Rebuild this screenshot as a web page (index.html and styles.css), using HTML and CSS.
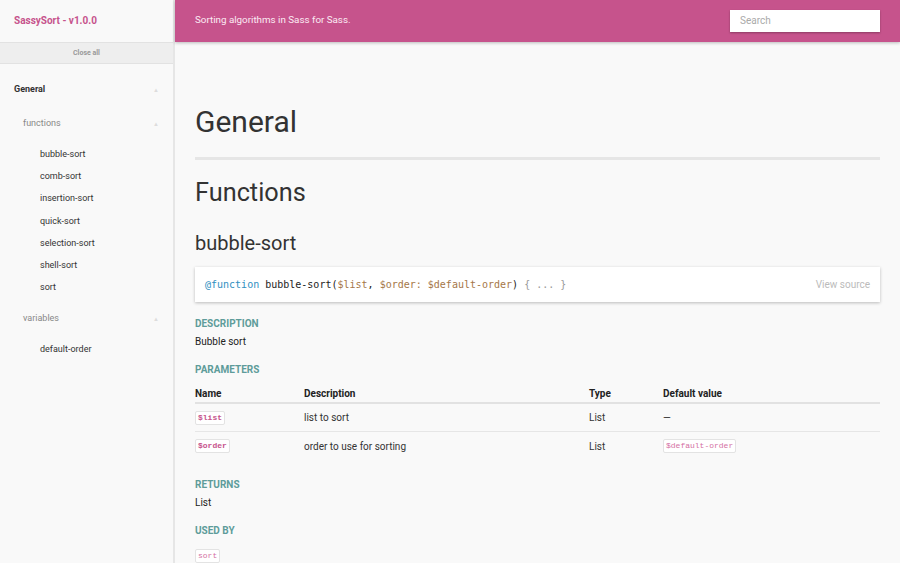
FILE: index.html
```html
<!DOCTYPE html>
<html>
<head>
<meta charset="utf-8">
<link rel="stylesheet" href="styles.css">
</head>
<body>
<div class="page">
  <aside class="sidebar">
    <div class="side-head"><a class="brand">SassySort - v1.0.0</a></div>
    <div class="close-all">Close all</div>
    <nav class="nav">
      <div class="group">
        <div class="group-title"><span>General</span><span class="caret">▲</span></div>
        <div class="sub">
          <div class="sub-title"><span>functions</span><span class="caret">▲</span></div>
          <ul class="items">
            <li>bubble-sort</li>
            <li>comb-sort</li>
            <li>insertion-sort</li>
            <li>quick-sort</li>
            <li>selection-sort</li>
            <li>shell-sort</li>
            <li>sort</li>
          </ul>
        </div>
        <div class="sub">
          <div class="sub-title"><span>variables</span><span class="caret">▲</span></div>
          <ul class="items">
            <li>default-order</li>
          </ul>
        </div>
      </div>
    </nav>
  </aside>
  <div class="main">
    <header class="topbar">
      <p class="tagline">Sorting algorithms in Sass for Sass.</p>
      <div class="search">Search</div>
    </header>
    <section class="content">
      <h1 class="h-group">General</h1>
      <h2 class="h-type">Functions</h2>
      <h3 class="h-item">bubble-sort</h3>
      <div class="code">
        <code><span class="kw">@function</span> bubble-sort(<span class="var">$list</span>, <span class="var">$order</span><span class="var">:</span> <span class="var">$default-order</span>) <span class="dim">{ ... }</span></code>
        <span class="view">View source</span>
      </div>
      <h4 class="label">Description</h4>
      <p class="text">Bubble sort</p>
      <h4 class="label">Parameters</h4>
      <table class="params">
        <thead>
          <tr><th class="c-name">Name</th><th class="c-desc">Description</th><th class="c-type">Type</th><th>Default value</th></tr>
        </thead>
        <tbody>
          <tr><td><span class="tag strong">$list</span></td><td>list to sort</td><td>List</td><td>—</td></tr>
          <tr><td><span class="tag strong">$order</span></td><td>order to use for sorting</td><td>List</td><td><span class="tag">$default-order</span></td></tr>
        </tbody>
      </table>
      <h4 class="label label-gap">Returns</h4>
      <p class="text">List</p>
      <h4 class="label">Used by</h4>
      <p class="tags"><span class="tag">sort</span></p>
    </section>
  </div>
</div>
</body>
</html>
```

FILE: styles.css
```css
* { box-sizing: border-box; }
html, body { margin: 0; padding: 0; }
body {
  font-family: Roboto, "Liberation Sans", sans-serif;
  background: #f9f9f9;
  color: #333;
  width: 900px;
  height: 563px;
  overflow: hidden;
}
.page { display: flex; height: 563px; }

.sidebar {
  width: 175px;
  flex: none;
  background: #f9f9f9;
  border-right: 2px solid #e6e6e6;
}
.side-head {
  height: 42px;
  display: flex;
  align-items: center;
  padding-left: 14px;
  padding-bottom: 1px;
}
.brand { color: #c6538c; font-weight: 700; font-size: 10px; }
.close-all {
  height: 22px;
  background: #eeeeee;
  border-top: 1px solid #e2e2e2;
  border-bottom: 1px solid #e2e2e2;
  color: #999;
  font-size: 7px;
  font-weight: 700;
  text-align: center;
  line-height: 20px;
}
.nav { padding: 15px 0 0 0; }
.group-title, .sub-title {
  display: flex;
  justify-content: space-between;
  align-items: center;
  padding-right: 14px;
}
.group-title {
  padding-left: 14px;
  font-weight: 700;
  font-size: 9px;
  color: #333;
  height: 20px;
}
.sub-title {
  padding-left: 23px;
  font-size: 9px;
  color: #888;
  height: 20px;
  margin-top: 14px;
}
.sub + .sub .sub-title { margin-top: 10px; }
.caret { color: #ddd; font-size: 6px; }
.items { list-style: none; margin: 0; padding: 10px 0 0 40px; }
.items li { font-size: 9px; color: #333; height: 22.2px; line-height: 22px; }

.main { flex: 1; display: flex; flex-direction: column; min-width: 0; }
.topbar {
  flex: none;
  height: 42px;
  background: #c6538c;
  box-shadow: 0 1px 3px rgba(0,0,0,0.25);
  display: flex;
  align-items: center;
  justify-content: space-between;
  padding: 0 20px;
  position: relative;
  z-index: 1;
}
.tagline { margin: 0 0 3px 0; color: #fbeaf3; font-size: 9.8px; }
.search {
  width: 150px;
  height: 22px;
  background: #fff;
  box-shadow: 0 1px 2px rgba(0,0,0,0.3);
  color: #aaa;
  font-size: 10px;
  line-height: 22px;
  padding-left: 10px;
}

.content { flex: none; padding: 0 20px; }
.h-group {
  margin: 61px 0 0 0;
  font-size: 30px;
  font-weight: 400;
  color: #333;
  line-height: 38px;
  padding-bottom: 16px;
  border-bottom: 3px solid #e6e6e6;
}
.h-type {
  margin: 17px 0 0 0;
  font-size: 25.3px;
  font-weight: 400;
  line-height: 32px;
  color: #333;
}
.h-item {
  margin: 22px 0 0 0;
  font-size: 20px;
  font-weight: 400;
  line-height: 24px;
  color: #333;
}
.code {
  margin-top: 12px;
  height: 35px;
  background: #fff;
  box-shadow: 0 1px 3px rgba(0,0,0,0.25);
  display: flex;
  align-items: center;
  justify-content: space-between;
  padding: 0 10px;
}
.code code {
  font-family: "DejaVu Sans Mono", "Liberation Mono", monospace;
  font-size: 10px;
  color: #222;
}
.kw { color: #2f8fbf; }
.var { color: #a57748; }
.dim { color: #999; }
.view { color: #bbb; font-size: 10px; }

.label {
  margin: 16px 0 0 0;
  font-size: 10px;
  font-weight: 700;
  text-transform: uppercase;
  color: #5e9c9a;
  line-height: 12px;
}
.label-gap { margin-top: 19px; }
.text { margin: 6px 0 0 0; font-size: 10px; color: #222; line-height: 12px; }

.params { width: 100%; border-collapse: collapse; margin-top: 8px; font-size: 10px; }
.params th {
  text-align: left;
  font-weight: 700;
  color: #222;
  height: 19px;
  padding: 0;
  border-bottom: 2px solid #e2e2e2;
}
.params td {
  padding: 0;
  height: 28.5px;
  color: #333;
  border-bottom: 1px solid #e6e6e6;
}
.params tbody tr:last-child td { border-bottom: none; }
.c-name { width: 109px; }
.c-desc { width: 285px; }
.c-type { width: 74px; }

.tag {
  display: inline-block;
  font-family: "Liberation Mono", monospace;
  font-size: 8px;
  color: #d470a3;
  background: #fff;
  border: 1px solid #e3e3e3;
  border-radius: 2px;
  padding: 1px 2px;
  line-height: 10px;
}
.tag.strong { color: #c6538c; font-weight: 700; }
.tags { margin: 6px 0 0 0; }
```
